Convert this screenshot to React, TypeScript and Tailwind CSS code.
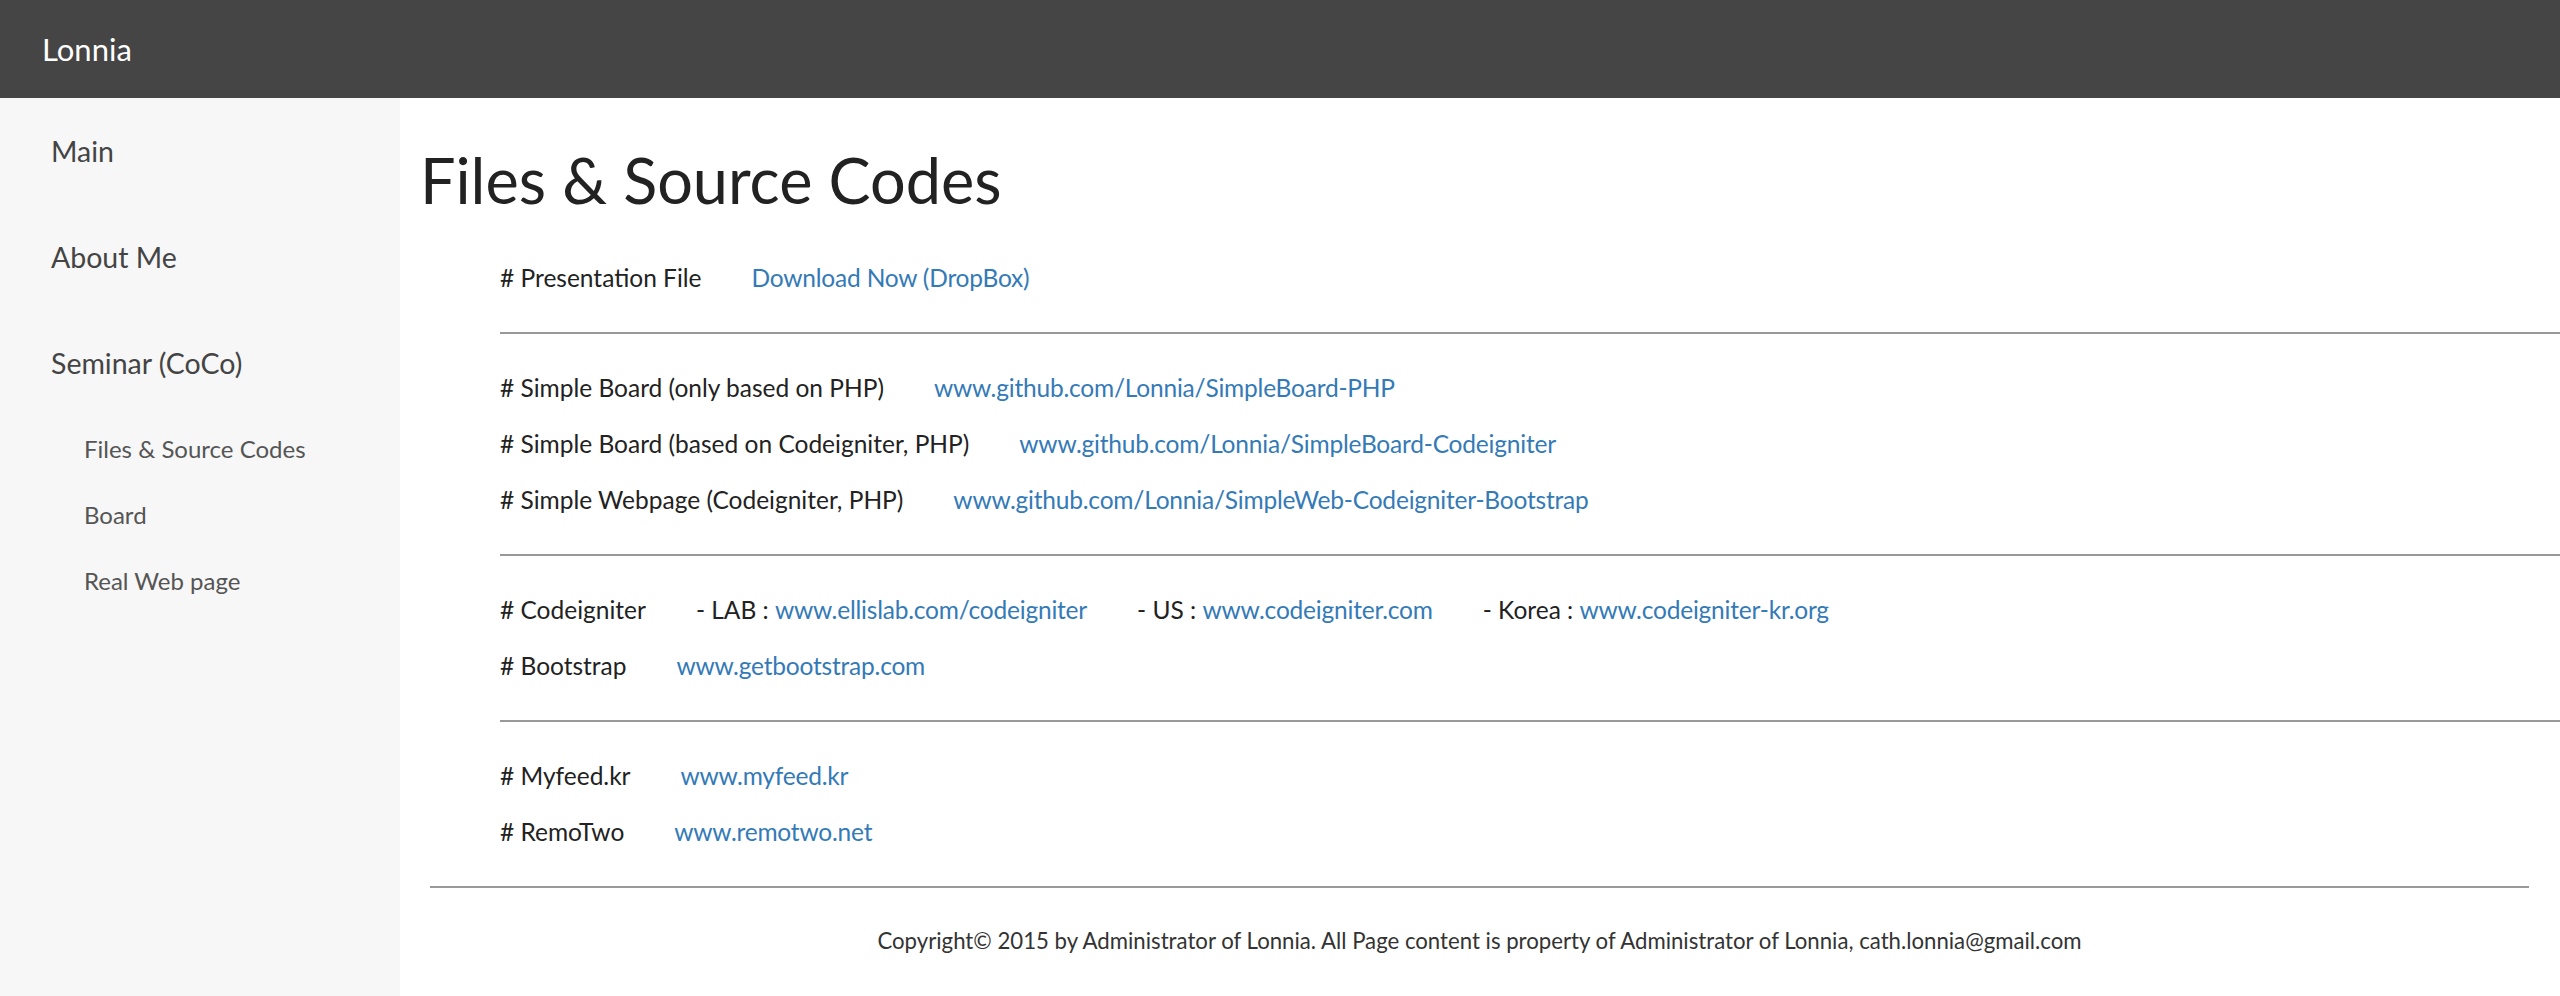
import React from 'react';

const FONT = "font-['Lato','DejaVu_Sans_Condensed',sans-serif]";

const mainNav = ['Main', 'About Me', 'Seminar (CoCo)'];
const subNav = ['Files & Source Codes', 'Board', 'Real Web page'];

const Link = ({ children }: { children: React.ReactNode }) => (
  <a href="#" className="text-[#337ab7] no-underline tracking-[-0.2px]">
    {children}
  </a>
);

const Row = ({ children }: { children: React.ReactNode }) => (
  <div className="flex items-center gap-[50px] h-[56px] leading-[56px] whitespace-nowrap">{children}</div>
);

const Divider = () => <div className="h-[2px] bg-[#999] my-[26px]"></div>;

export default function App() {
  return (
    <div className={`${FONT} min-h-[996px] flex flex-col bg-white`}>
      {/* top bar */}
      <header className="h-[98px] bg-[#454545] flex items-center pl-[42px]">
        <span className="text-white text-[31px] leading-none">Lonnia</span>
      </header>

      <div className="flex flex-1">
        {/* sidebar */}
        <aside className="w-[400px] shrink-0 bg-[#f7f7f7]">
          {mainNav.map((item) => (
            <div key={item} className="h-[106px] leading-[106px] pl-[51px] text-[28.5px] text-[#444]">
              {item}
            </div>
          ))}
          {subNav.map((item) => (
            <div key={item} className="h-[66px] leading-[66px] pl-[84px] text-[24px] text-[#555]">
              {item}
            </div>
          ))}
        </aside>

        {/* content */}
        <main className="flex-1 min-w-0 overflow-hidden pl-[20px]">
          <h1 className="text-[63px] leading-[80px] text-[#222] mt-[42px] mb-[30px]">Files &amp; Source Codes</h1>

          <div className="ml-[80px] text-[24.5px] text-[#222]">
            <Row>
              <span># Presentation File</span>
              <Link>Download Now (DropBox)</Link>
            </Row>
            <Divider />
            <Row>
              <span># Simple Board (only based on PHP)</span>
              <Link>www.github.com/Lonnia/SimpleBoard-PHP</Link>
            </Row>
            <Row>
              <span># Simple Board (based on Codeigniter, PHP)</span>
              <Link>www.github.com/Lonnia/SimpleBoard-Codeigniter</Link>
            </Row>
            <Row>
              <span># Simple Webpage (Codeigniter, PHP)</span>
              <Link>www.github.com/Lonnia/SimpleWeb-Codeigniter-Bootstrap</Link>
            </Row>
            <Divider />
            <Row>
              <span># Codeigniter</span>
              <span>
                - LAB : <Link>www.ellislab.com/codeigniter</Link>
              </span>
              <span>
                - US : <Link>www.codeigniter.com</Link>
              </span>
              <span>
                - Korea : <Link>www.codeigniter-kr.org</Link>
              </span>
            </Row>
            <Row>
              <span># Bootstrap</span>
              <Link>www.getbootstrap.com</Link>
            </Row>
            <Divider />
            <Row>
              <span># Myfeed.kr</span>
              <Link>www.myfeed.kr</Link>
            </Row>
            <Row>
              <span># RemoTwo</span>
              <Link>www.remotwo.net</Link>
            </Row>
          </div>

          <footer className="ml-[10px] mr-[31px]">
            <div className="h-[2px] bg-[#999] mt-[26px]"></div>
            <p className="text-center text-[22.2px] leading-[36px] text-[#333] mt-[35px] pb-[37px]">
              Copyright© 2015 by Administrator of Lonnia. All Page content is property of Administrator of Lonnia, cath.lonnia@gmail.com
            </p>
          </footer>
        </main>
      </div>
    </div>
  );
}
